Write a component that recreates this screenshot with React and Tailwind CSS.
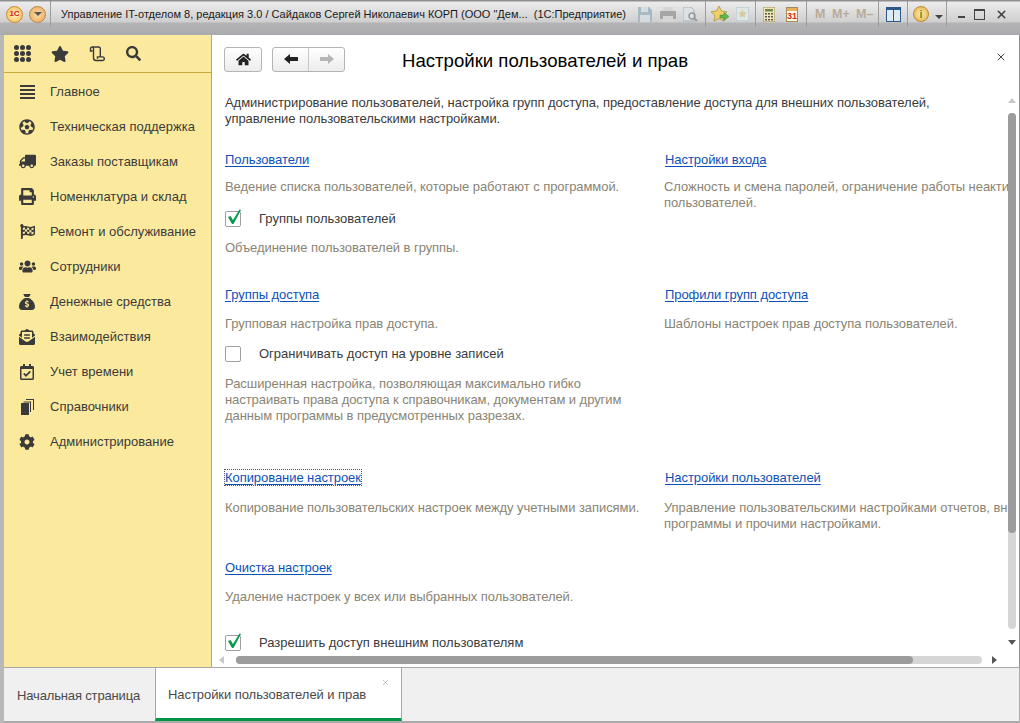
import React from "react";
import { X } from "lucide-react";
import {
  FaHome,
  FaStar,
  FaSearch,
  FaTruck,
  FaPrint,
  FaFlagCheckered,
  FaUsers,
  FaEnvelopeOpenText,
  FaRegCalendarCheck,
  FaCog,
  FaFutbol,
} from "react-icons/fa";
import { FaSackDollar } from "react-icons/fa6";

const menuItems = [
  { label: "Главное", icon: "menu" },
  { label: "Техническая поддержка", icon: "ball" },
  { label: "Заказы поставщикам", icon: "truck" },
  { label: "Номенклатура и склад", icon: "printer" },
  { label: "Ремонт и обслуживание", icon: "flag" },
  { label: "Сотрудники", icon: "users" },
  { label: "Денежные средства", icon: "money" },
  { label: "Взаимодействия", icon: "mail" },
  { label: "Учет времени", icon: "calendar" },
  { label: "Справочники", icon: "books" },
  { label: "Администрирование", icon: "gear" },
];

const MenuIcon = ({ name }) => {
  const c = "#3a3a3a";
  if (name === "menu")
    return (
      <svg width="15" height="14" viewBox="0 0 15 14" fill={c}>
        <path d="M0 0h15v2H0z M0 4h15v2H0z M0 8h15v2H0z M0 12h15v2H0z" />
      </svg>
    );
  if (name === "ball") return <FaFutbol size={16} color={c} />;
  if (name === "truck") return <FaTruck size={17} color={c} className="-scale-x-100" />;
  if (name === "printer") return <FaPrint size={17} color={c} />;
  if (name === "flag") return <FaFlagCheckered size={15} color={c} />;
  if (name === "users") return <FaUsers size={17} color={c} />;
  if (name === "money") return <FaSackDollar size={16} color={c} />;
  if (name === "mail") return <FaEnvelopeOpenText size={16} color={c} />;
  if (name === "calendar") return <FaRegCalendarCheck size={16} color={c} />;
  if (name === "books")
    return (
      <svg width="13" height="16" viewBox="0 0 13 16" fill={c}>
        <path d="M0 4h8v12H0z" />
        <path d="M2.500 2.500h7.500V13H9V3.500H2.500z M5 0h8v11h-1V1H5z" />
      </svg>
    );
  return <FaCog size={16} color={c} />;
};

const ToolSep = () => <div className="w-px h-[26px] bg-[#9c9c9c] shrink-0" />;

const TitleBar = () => (
  <div className="h-[35px] shrink-0 bg-[linear-gradient(#8f8f8f_0,#8f8f8f_1px,#ececec_2px,#cfcfcf_22px,#b4b4b6_23px,#a9aaad_35px)] flex items-start pt-[1px]">
    <div className="h-[26px] flex items-center w-full">
      <div className="ml-[6px] w-[17px] h-[17px] rounded-full bg-[radial-gradient(#fff3c4,#f7b54a)] border border-[#c98a2e] flex items-center justify-center text-[8px] font-bold text-[#d6201c] shrink-0">1С</div>
      <div className="ml-[6px] w-[17px] h-[17px] rounded-full bg-[radial-gradient(#fbdca4,#eaa65a)] border border-[#b98647] flex items-center justify-center shrink-0">
        <div className="w-0 h-0 border-x-[4px] border-x-transparent border-t-[4px] border-t-[#555]" />
      </div>
      <div className="ml-[4px] w-px h-[26px] bg-[#9c9c9c] shrink-0" />
      <div className="ml-[10px] w-[577px] shrink-0 text-[11px] text-[#1a1a1a] whitespace-pre">
        Управление IT-отделом 8, редакция 3.0 / Сайдаков Сергей Николаевич КОРП (ООО "Дем...  (1С:Предприятие)
      </div>
      <svg className="shrink-0" width="14" height="15" viewBox="0 0 14 15">
        <path d="M0 0h11l3 3v12H0z" fill="#a9b9c4" />
        <path d="M3 0h7v5H3z M2 8h10v7H2z" fill="#d5dbdf" />
      </svg>
      <svg className="ml-[8px] shrink-0" width="16" height="15" viewBox="0 0 16 15">
        <path d="M3 0h10v5H3z M3 10h10v5H3z" fill="#d6d6d6" />
        <path d="M1 4h14a1 1 0 0 1 1 1v7h-3v-3H3v3H0V5a1 1 0 0 1 1-1z" fill="#a5a5a5" />
      </svg>
      <svg className="ml-[7px] shrink-0" width="15" height="15" viewBox="0 0 15 15">
        <path d="M0 0h8l3 3v11H0z" fill="#dbe1e5" stroke="#a9b3ba" />
        <circle cx="9" cy="9" r="3" fill="none" stroke="#9a9a9a" strokeWidth="1.500" />
        <path d="M11 11l3 3" stroke="#9a9a9a" strokeWidth="2" />
      </svg>
      <div className="ml-[7px] w-px h-[26px] bg-[#9c9c9c] shrink-0" />
      <svg className="ml-[5px] shrink-0" width="18" height="17" viewBox="0 0 18 17">
        <path d="M8 0l2.500 5 5.500.8-4 3.900.9 5.300L8 12.500 3 15l1-5.300-4-3.900L5.500 5z" fill="#f2cf6b" stroke="#a98a33" strokeWidth=".7" />
        <path d="M9 9h4V6.500l5 4-5 4V12H9z" fill="#62b64a" stroke="#3c7f2c" strokeWidth=".5" />
      </svg>
      <svg className="ml-[7px] shrink-0" width="13" height="14" viewBox="0 0 13 14">
        <path d="M0 0h13v14H0z" fill="#dfe6ea" stroke="#b3bec6" />
        <path d="M6.500 2.500l1.300 2.700 3 .4-2.200 2.100.5 3-2.600-1.400-2.600 1.400.5-3-2.200-2.100 3-.4z" fill="#d8c99b" />
      </svg>
      <div className="ml-[6px] w-px h-[26px] bg-[#9c9c9c] shrink-0" />
      <svg className="ml-[7px] shrink-0" width="12" height="15" viewBox="0 0 12 15">
        <path d="M0 0h12v15H0z" fill="#f4e6b8" stroke="#9a8a55" />
        <path d="M2 2h8v2.500H2z" fill="#6c8a4a" />
        <path d="M2 6h2v1.500H2z M5 6h2v1.500H5z M8 6h2v1.500H8z M2 9h2v1.500H2z M5 9h2v1.500H5z M8 9h2v1.500H8z M2 12h2v1.500H2z M5 12h2v1.500H5z M8 12h2v1.500H8z" fill="#555" />
      </svg>
      <div className="ml-[11px] shrink-0 w-[12px] h-[15px] border border-[#a58c5c] bg-[#fdf6e0] flex flex-col">
        <div className="h-[4px] bg-[#e8b05a]" />
        <div className="text-[9px] leading-[10px] text-[#d8281c] text-center font-bold">31</div>
      </div>
      <div className="ml-[8px] shrink-0"><ToolSep /></div>
      <div className="ml-[8px] w-[12px] text-[12.5px] font-bold text-[#b9ab9b] shrink-0">M</div>
      <div className="ml-[5px] w-[21px] text-[12.5px] font-bold text-[#b9ab9b] shrink-0 whitespace-nowrap">M+</div>
      <div className="ml-[3px] w-[20px] text-[12.5px] font-bold text-[#b9ab9b] shrink-0 whitespace-nowrap">M–</div>
      <div className="ml-[2px] shrink-0"><ToolSep /></div>
      <div className="ml-[7px] shrink-0 w-[15px] h-[15px] border-t-[3px] border-[#2a5a8c] border-x border-b flex bg-[#dfeaf3]">
        <div className="w-1/2 border-r border-[#2a5a8c]" />
      </div>
      <div className="ml-[6px] shrink-0"><ToolSep /></div>
      <div className="ml-[5px] shrink-0 w-[16px] h-[16px] rounded-full bg-[radial-gradient(#fdf0b5,#e8a83a)] border border-[#b98a35] text-[11px] font-bold text-[#5e8b2a] flex items-center justify-center">i</div>
      <div className="ml-[6px] mt-[5px] shrink-0 w-0 h-0 border-x-[4px] border-x-transparent border-t-[4px] border-t-[#444]" />
      <div className="ml-[3px] shrink-0"><ToolSep /></div>
      <div className="ml-[11px] mt-[6px] shrink-0 w-[7px] h-[2px] bg-[#444]" />
      <div className="ml-[9px] shrink-0 w-[11px] h-[11px] border border-t-2 border-[#444]" />
      <X className="ml-[10px] shrink-0" size={13} strokeWidth={3} color="#444" />
    </div>
  </div>
);

const Sidebar = () => (
  <aside className="w-[208px] shrink-0 bg-[#fbea9d] border-r border-[#c9a93a] flex flex-col">
    <div className="h-[38px] shrink-0 border-b border-[#c9a93a] flex items-center pl-[10px]">
      <div className="grid grid-cols-3 gap-[1px] w-[17px]">
        {Array.from({ length: 9 }).map((_, i) => (
          <div key={i} className="w-[5px] h-[5px] rounded-full bg-[#3a3a3a]" />
        ))}
      </div>
      <FaStar className="ml-[20px]" size={18} color="#3a3a3a" />
      <svg className="ml-[20px]" width="16" height="16" viewBox="0 0 16 16" fill="none" stroke="#3a3a3a" strokeWidth="1.400">
        <path d="M3.500 5H1.500V2.500a1.500 1.500 0 0 1 3 0V12a2.500 2.500 0 0 0 2.500 2.500H13.500a1.800 1.800 0 0 0 0-3.600H8.500v1.800M2.800 1h7a1.500 1.500 0 0 1 1.500 1.500V11" />
      </svg>
      <FaSearch className="ml-[21px]" size={15} color="#3a3a3a" />
    </div>
    <nav className="flex flex-col pt-[1px]">
      {menuItems.map((item) => (
        <div key={item.label} className="h-[35px] flex items-center">
          <div className="w-[46px] flex justify-center shrink-0">
            <MenuIcon name={item.icon} />
          </div>
          <span className="text-[13px] text-[#3b3b3b] whitespace-nowrap">{item.label}</span>
        </div>
      ))}
    </nav>
  </aside>
);

const Link = ({ children, focused }) => (
  <a className={"text-[13px] leading-[16px] text-[#0b51b8] underline underline-offset-2 whitespace-nowrap " + (focused ? "outline-1 outline-dotted outline-[#555]" : "")}>
    {children}
  </a>
);

const Desc = ({ children, className = "" }) => (
  <p className={"text-[13px] leading-[16px] text-[#8a8474] whitespace-nowrap " + className}>{children}</p>
);

const CheckRow = ({ checked, label }) => (
  <div className="flex items-center h-[18px]">
    <div className="relative w-[16px] h-[16px] border border-[#a0a0a0] rounded-[2px] bg-white">
      {checked && (
        <svg className="absolute -top-[3px] left-0" width="17" height="17" viewBox="0 -2 17 17">
          <path d="M2 6l2.500-1 2.500 4L13.500-1.500 15-1 7.500 13H6z" fill="#069a4a" />
        </svg>
      )}
    </div>
    <span className="ml-[18px] text-[13px] tracking-normal text-[#3b3b3b] whitespace-nowrap">{label}</span>
  </div>
);

const Content = () => (
  <main className="relative flex-1 min-w-0 bg-white overflow-hidden border-r border-[#8c8c8c] tracking-[-0.06px]">
    <div className="pt-[11px] pl-[13px]">
      <div className="flex items-center h-[26px] -ml-[1px]">
        <button className="w-[38px] h-[25px] bg-[linear-gradient(#fff,#ececec)] border border-[#b4b4b4] rounded-[3px] flex items-center justify-center">
          <FaHome size={15} color="#222" />
        </button>
        <div className="ml-[10px] w-[73px] h-[25px] bg-[linear-gradient(#fff,#ececec)] border border-[#b4b4b4] rounded-[3px] flex">
          <div className="w-[36px] border-r border-[#c8c8c8] flex items-center justify-center">
            <svg width="14" height="10" viewBox="0 0 14 10" fill="#222">
              <path d="M0 5l6-5v3h8v4H6v3z" />
            </svg>
          </div>
          <div className="flex-1 flex items-center justify-center">
            <svg width="14" height="10" viewBox="0 0 14 10" fill="#b5b5b5">
              <path d="M14 5L8 0v3H0v4h8v3z" />
            </svg>
          </div>
        </div>
        <h1 className="ml-[57px] mt-[4px] text-[18.6px] tracking-normal text-black font-normal whitespace-nowrap">Настройки пользователей и прав</h1>
      </div>
      <p className="mt-[23px] text-[13px] leading-[16px] text-[#3b3b3b] whitespace-nowrap">
        Администрирование пользователей, настройка групп доступа, предоставление доступа для внешних пользователей,
        <br />
        управление пользовательскими настройками.
      </p>

      <div className="mt-[20px] grid grid-cols-[439px_342px]">
        <div className="h-[135px]">
          <Link>Пользователи</Link>
          <Desc className="mt-[8px]">Ведение списка пользователей, которые работают с программой.</Desc>
          <div className="mt-[15px]"><CheckRow checked label="Группы пользователей" /></div>
          <Desc className="mt-[12px]">Объединение пользователей в группы.</Desc>
        </div>
        <div className="h-[135px]">
          <div className="pl-[1px]"><Link>Настройки входа</Link></div>
          <Desc className="mt-[8px]">Сложность и смена паролей, ограничение работы неакти</Desc>
          <Desc>пользователей.</Desc>
        </div>
        <div className="h-[183px]">
          <Link>Группы доступа</Link>
          <Desc className="mt-[10px]">Групповая настройка прав доступа.</Desc>
          <div className="mt-[13px]"><CheckRow label="Ограничивать доступ на уровне записей" /></div>
          <Desc className="mt-[13px]">Расширенная настройка, позволяющая максимально гибко</Desc>
          <Desc>настраивать права доступа к справочникам, документам и другим</Desc>
          <Desc>данным программы в предусмотренных разрезах.</Desc>
        </div>
        <div className="h-[183px]">
          <div className="pl-[1px]"><Link>Профили групп доступа</Link></div>
          <Desc className="mt-[10px]">Шаблоны настроек прав доступа пользователей.</Desc>
        </div>
        <div className="h-[90px]">
          <Link focused>Копирование настроек</Link>
          <Desc className="mt-[11px]">Копирование пользовательских настроек между учетными записями.</Desc>
        </div>
        <div className="h-[90px]">
          <div className="pl-[1px]"><Link>Настройки пользователей</Link></div>
          <Desc className="mt-[11px]">Управление пользовательскими настройками отчетов, вн</Desc>
          <Desc>программы и прочими настройками.</Desc>
        </div>
        <div className="col-span-2">
          <Link>Очистка настроек</Link>
          <Desc className="mt-[10px]">Удаление настроек у всех или выбранных пользователей.</Desc>
          <div className="mt-[29px]"><CheckRow checked label="Разрешить доступ внешним пользователям" /></div>
        </div>
      </div>
    </div>

    <X className="absolute top-[16px] right-[12px]" size={12} strokeWidth={2} color="#444" />

    {/* vertical scrollbar */}
    <div className="absolute top-[63px] right-[3px] w-0 h-0 border-x-[4px] border-x-transparent border-b-[5px] border-b-[#c8c8c8]" />
    <div className="absolute top-[78px] bottom-[38px] right-[3px] w-[8px] rounded-full bg-[#d6d6d6]">
      <div className="h-[420px] rounded-full bg-[#9c9c9c]" />
    </div>
    <div className="absolute bottom-[22px] right-[3px] w-0 h-0 border-x-[4px] border-x-transparent border-t-[5px] border-t-[#555]" />

    {/* horizontal scrollbar */}
    <div className="absolute bottom-0 left-0 right-0 h-[15px] bg-white" />
    <div className="absolute bottom-[3px] left-[7px] w-0 h-0 border-y-[4px] border-y-transparent border-r-[5px] border-r-[#c8c8c8]" />
    <div className="absolute bottom-[3px] left-[24px] w-[746px] h-[8px] rounded-full bg-[#d6d6d6]">
      <div className="w-[677px] h-full rounded-full bg-[#9c9c9c]" />
    </div>
    <div className="absolute bottom-[3px] right-[22px] w-0 h-0 border-y-[4px] border-y-transparent border-l-[5px] border-l-[#555]" />
  </main>
);

const Tabs = () => (
  <div className="h-[56px] shrink-0 bg-[#f0f0f0] border-t border-[#a8a8a8] border-b-[2px] border-b-[#ababab] border-r border-r-[#ababab] flex">
    <div className="w-[151px] flex items-center pl-[13px] pt-[3px] text-[13px] tracking-[-0.15px] text-[#4a4a4a] whitespace-nowrap">Начальная страница</div>
    <div className="relative w-[247px] bg-white border-x border-[#a8a8a8] flex items-center pl-[12px] pt-[3px] text-[13px] tracking-[-0.06px] text-[#4a4a4a] whitespace-nowrap border-b-[3px] border-b-[#009646]">
      Настройки пользователей и прав
      <X className="absolute top-[10px] right-[11px]" size={9} strokeWidth={1.5} color="#999" />
    </div>
  </div>
);

export default function App() {
  return (
    <div className="w-[1020px] h-[723px] flex flex-col overflow-hidden bg-white font-['Liberation_Sans',sans-serif]">
      <TitleBar />
      <div className="flex-1 min-h-0 flex border-l-[4px] border-[#b8b8b8]">
        <Sidebar />
        <Content />
      </div>
      <div className="border-l-[4px] border-[#b8b8b8]">
        <Tabs />
      </div>
    </div>
  );
}
